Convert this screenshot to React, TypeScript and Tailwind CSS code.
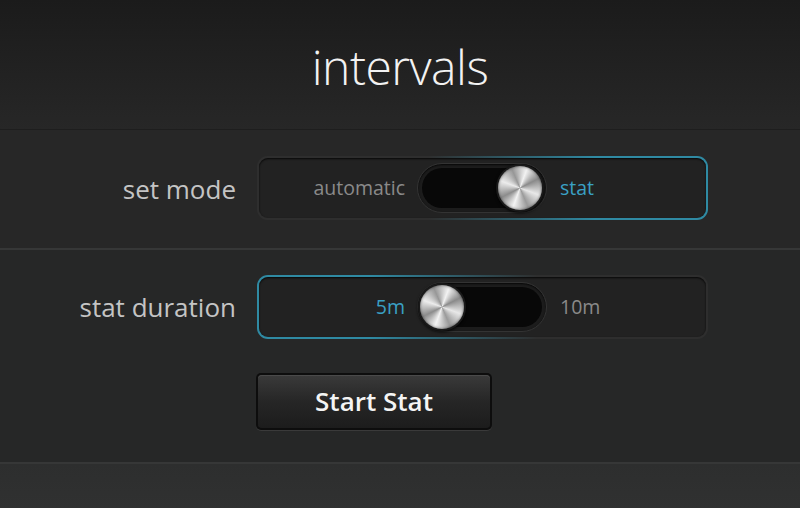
import React from "react";

const font = { fontFamily: '"Open Sans", "Noto Sans", sans-serif' };

function Knob() {
  return (
    <div className="w-[48px] h-[48px] rounded-full p-[2px] bg-[#1a1a1a] shadow-[0_1px_3px_rgba(0,0,0,0.9)]">
      <div className="w-full h-full rounded-full bg-[conic-gradient(from_20deg,#f2f2f2,#8a8a8a_12%,#e8e8e8_25%,#9a9a9a_38%,#f4f4f4_50%,#8c8c8c_62%,#ececec_75%,#979797_88%,#f2f2f2)] shadow-[inset_0_0_3px_rgba(0,0,0,0.6)]" />
    </div>
  );
}

function Track({ on }: { on: boolean }) {
  return (
    <div className="w-[130px] h-[50px] rounded-full p-[4px] bg-[#1c1c1c] border border-[#333] shadow-[inset_0_1px_2px_rgba(0,0,0,0.8)]">
      <div
        className={
          "w-full h-full rounded-full bg-[#080808] flex items-center " +
          (on ? "justify-end" : "justify-start")
        }
      >
        <div className={on ? "mr-[-2px]" : "ml-[-4px]"}>
          <Knob />
        </div>
      </div>
    </div>
  );
}

function Box({
  left,
  right,
  on,
}: {
  left: string;
  right: string;
  on: boolean;
}) {
  return (
    <div
      className={
        "w-[451px] h-[64px] rounded-[11px] p-[2px] " +
        (on
          ? "bg-[linear-gradient(to_right,#2e2e2e_0%,#2e2e2e_38%,#2f8aa3_75%,#2f8aa3_100%)]"
          : "bg-[linear-gradient(to_right,#2f8aa3_0%,#2f8aa3_25%,#2e2e2e_62%,#2e2e2e_100%)]")
      }
    >
      <div className="w-full h-full rounded-[9px] bg-[#222222] shadow-[inset_0_1px_2px_rgba(0,0,0,0.8)] flex items-center">
        <div
          className={
            "w-[158px] text-right pr-[12px] text-[19.5px] " +
            (on ? "text-[#8a8a8a]" : "text-[#3aa0c4] font-medium")
          }
        >
          {left}
        </div>
        <Track on={on} />
        <div
          className={
            "pl-[13px] text-[19.5px] " +
            (on ? "text-[#3aa0c4] font-medium" : "text-[#8a8a8a]")
          }
        >
          {right}
        </div>
      </div>
    </div>
  );
}

export default function App() {
  return (
    <div
      className="w-[800px] h-[508px] overflow-hidden flex flex-col bg-[#272727]"
      style={font}
    >
      <div className="h-[130px] shrink-0 bg-[linear-gradient(to_bottom,#1b1b1b,#272727)] flex items-center justify-center border-b border-[#222]">
        <div className="text-[48px] font-light text-[#f2f2f2] leading-none mt-[5px] tracking-[-0.5px]">
          intervals
        </div>
      </div>
      <div className="h-[120px] shrink-0 flex items-center border-b-2 border-[#363737] shadow-[0_-1px_0_#1e1e1e]">
        <div className="w-[237px] text-right text-[26px] text-[#c4c4c4] pr-[1px] mt-[1px]">
          set mode
        </div>
        <div className="ml-[20px] mt-[-3px]">
          <Box left="automatic" right="stat" on={true} />
        </div>
      </div>
      <div className="h-[214px] shrink-0 flex flex-col bg-[#262727] border-b-2 border-[#363737]">
        <div className="flex items-center mt-[25px]">
          <div className="w-[237px] text-right text-[26px] text-[#c4c4c4] pr-[1px] mt-[1px]">
            stat duration
          </div>
          <div className="ml-[20px]">
            <Box left="5m" right="10m" on={false} />
          </div>
        </div>
        <div className="ml-[256px] mt-[34px]">
          <div className="w-[236px] h-[57px] rounded-[5px] bg-[#0d0d0d] p-[2px] shadow-[0_1px_0_#3a3a3a]">
            <div className="w-full h-full rounded-[4px] bg-[linear-gradient(to_bottom,#3a3a3a,#262626_50%,#1c1c1c)] shadow-[inset_0_1px_0_#4a4a4a] flex items-center justify-center text-[26px] font-semibold text-[#f4f4f4]">
              Start Stat
            </div>
          </div>
        </div>
      </div>
      <div className="flex-1 bg-[linear-gradient(to_bottom,#2d2e2e,#303131)]" />
    </div>
  );
}
